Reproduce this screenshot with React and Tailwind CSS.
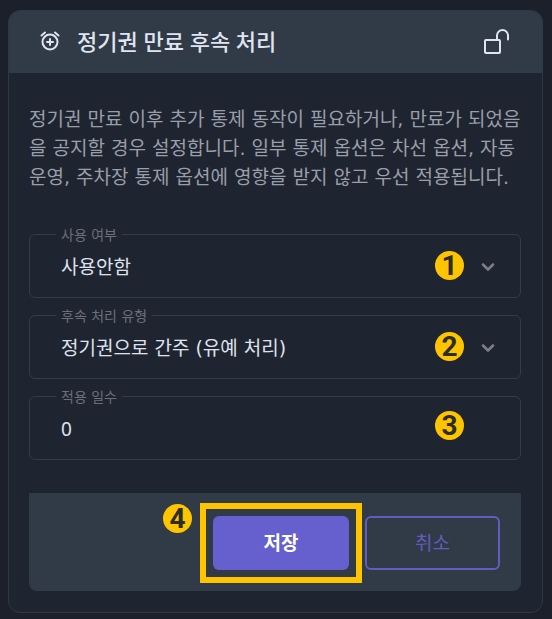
import React, { useState } from "react";

const AlarmIcon = () => (
  <svg
    width="22"
    height="22"
    viewBox="0 0 22 22"
    fill="none"
    stroke="currentColor"
    strokeWidth="2"
    strokeLinecap="round"
  >
    <circle cx="11" cy="12" r="7.5" />
    <path d="M11 9v6M8 12h6" />
    <path d="M2.5 5.5l3.5-3M19.5 5.5l-3.5-3" />
  </svg>
);

const UnlockIcon = () => (
  <svg
    width="28"
    height="28"
    viewBox="0 0 28 28"
    fill="none"
    stroke="currentColor"
    strokeWidth="2"
    strokeLinecap="round"
    strokeLinejoin="round"
  >
    <rect x="2" y="13" width="15" height="13" rx="1" />
    <path d="M14 13V8.5a5.5 5.5 0 0 1 11 0v4" />
  </svg>
);

const ChevronIcon = () => (
  <svg
    className="pointer-events-none absolute top-6 right-6"
    width="16"
    height="16"
    viewBox="0 0 16 16"
    fill="none"
    stroke="#7b7f8b"
    strokeWidth="2.5"
    strokeLinecap="round"
    strokeLinejoin="round"
  >
    <path d="M3 5.5l5 5 5-5" />
  </svg>
);

const Badge = ({ number, className }) => (
  <span
    className={`pointer-events-none absolute flex size-[29px] items-center justify-center rounded-full bg-[#ffc400] font-['Roboto',sans-serif] text-[28px] leading-none font-bold text-[#2b2d26] ${className}`}
  >
    {number}
  </span>
);

const Field = ({ id, label, children }) => (
  <div className="relative h-16 rounded-md border border-[#353b47]">
    <label
      htmlFor={id}
      className="absolute -top-2.5 left-[26px] bg-[#1f2530] px-[5px] text-[14px] leading-5 text-[#6a6f7b]"
    >
      {label}
    </label>
    {children}
  </div>
);

const controlClass =
  "h-full w-full appearance-none bg-transparent pt-0.5 pl-[31px] pr-14 text-[19px] text-[#dfe2ee] outline-none";

const App = () => {
  const [formData, setFormData] = useState({
    enabled: "off",
    type: "grace",
    days: "0",
  });

  const handleChange = (e) => {
    setFormData({ ...formData, [e.target.name]: e.target.value });
  };

  return (
    <div className="min-h-screen bg-[#1b202b] pt-2.5 pr-[9px] pb-1.5 pl-2 font-['DejaVu_Sans','Noto_Sans_CJK_KR',sans-serif]">
      <div className="overflow-hidden rounded-xl border border-[#303844] bg-[#1f2530]">
        <div className="flex h-[62px] items-center justify-between bg-[#313a47] pr-[31px] pb-0.5 pl-[30px] text-[#dfe4f0]">
          <div className="flex items-center gap-4">
            <AlarmIcon />
            <h2 className="font-['Noto_Sans','Noto_Sans_CJK_KR',sans-serif] text-[22px] leading-8 font-medium">
              정기권 만료 후속 처리
            </h2>
          </div>
          <button type="button" aria-label="잠금 해제">
            <UnlockIcon />
          </button>
        </div>

        <form
          className="pt-8 pr-[21px] pb-[21px] pl-5"
          onSubmit={(e) => e.preventDefault()}
        >
          <p className="text-[19px] leading-[29px] break-all text-[#9a9ea9]">
            정기권 만료 이후 추가 통제 동작이 필요하거나, 만료가 되었음을 공지할
            경우 설정합니다. 일부 통제 옵션은 차선 옵션, 자동 운영, 주차장 통제
            옵션에 영향을 받지 않고 우선 적용됩니다.
          </p>

          <div className="mt-[42px] flex flex-col gap-[17px]">
            <Field id="enabled" label="사용 여부">
              <select
                id="enabled"
                name="enabled"
                value={formData.enabled}
                onChange={handleChange}
                className={controlClass}
              >
                <option value="off">사용안함</option>
                <option value="on">사용함</option>
              </select>
              <ChevronIcon />
              <Badge number={1} className="top-4 right-14" />
            </Field>

            <Field id="type" label="후속 처리 유형">
              <select
                id="type"
                name="type"
                value={formData.type}
                onChange={handleChange}
                className={controlClass}
              >
                <option value="grace">정기권으로 간주 (유예 처리)</option>
              </select>
              <ChevronIcon />
              <Badge number={2} className="top-4 right-14" />
            </Field>

            <Field id="days" label="적용 일수">
              <input
                id="days"
                name="days"
                type="text"
                inputMode="numeric"
                value={formData.days}
                onChange={handleChange}
                className={`${controlClass} font-['Noto_Sans',sans-serif]`}
              />
              <Badge number={3} className="top-3.5 right-14" />
            </Field>
          </div>

          <div className="mt-[33px] flex justify-end gap-4 rounded-b-lg bg-[#313a47] px-[21px] pt-[23px] pb-[21px]">
            <div className="relative">
              <button
                type="submit"
                className="h-[54px] w-[136px] rounded-md bg-[#6660ce] text-[19px] font-bold text-white"
              >
                저장
              </button>
              <div className="pointer-events-none absolute -inset-[13px] border-[6px] border-[#ffc400]" />
              <Badge number={4} className="-top-3 -left-[50px]" />
            </div>
            <button
              type="button"
              className="h-[54px] w-[135px] rounded-md border-2 border-[#625dbc] text-[19px] text-[#625dbc]"
            >
              취소
            </button>
          </div>
        </form>
      </div>
    </div>
  );
};

export default App;
